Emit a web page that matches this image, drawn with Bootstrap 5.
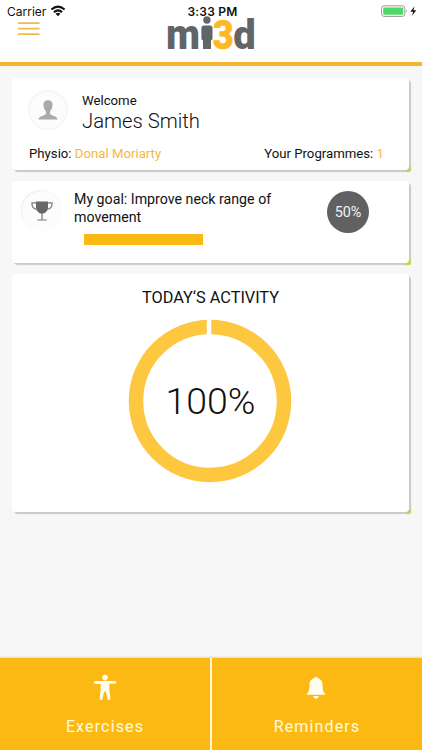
<!DOCTYPE html>
<html lang="en">
<head>
<meta charset="utf-8">
<meta name="viewport" content="width=device-width, initial-scale=1">
<title>mi3d</title>
<link href="https://cdn.jsdelivr.net/npm/bootstrap@5.3.0/dist/css/bootstrap.min.css" rel="stylesheet">
<style>
body{font-family:Roboto,sans-serif;background:#f7f7f7;color:#111;font-size:14px;line-height:17px;height:750px;overflow:hidden}
svg{display:block;flex:none}
.top-bar{height:66px;background:#fff;border-bottom:4px solid #f5b52e}
.status{height:20px;font-family:Inter,sans-serif;font-size:12px;padding:2px 5px 0 7px;color:#111}
.status > div{flex:1 0 0}
.clock{font-weight:600;font-size:12px;letter-spacing:.2px;padding-left:1px;position:relative;z-index:1}
.menu-btn{margin:2px 0 0 18px;padding:0;border:0;background:none}
.brand{left:162px;top:14px;overflow:visible}
.panel{background:#fff;border:0;border-radius:4px;box-shadow:2px 2px 1px #c9c9c5;position:relative}
.panel::after{content:"";position:absolute;right:-2px;bottom:-2px;width:5px;height:5px;background:linear-gradient(135deg,transparent 48%,#c5d63c 50%);border-bottom-right-radius:2px}
.panel-user{height:92px;padding:12px 25px 0 16px}
.panel-goal{height:82px;padding:10px 41px 0 10px}
.panel-day{height:238px;padding-top:15px}
.round{border-radius:50%;background:#fcfcfc;flex:none}
.round-user{width:40px;height:40px;border:2px solid #f6f6f6}
.round-goal{width:40px;height:40px;box-shadow:-1px -1px 2px #ececec}
.user-text{margin:2px 0 0 14px;font-size:13.2px}
.user-name{font-weight:300;font-size:20.3px;line-height:24px}
.user-meta{margin:12px 0 0 1px;font-size:13.2px}
.accent{color:#f5b83d}
.goal-text{margin-left:12px;width:210px;font-size:14.2px;line-height:17.5px}
.goal-bar{height:11px;width:119px;border-radius:0;margin:8px 0 0 10px;background:none}
.goal-bar .progress-bar{background:#fdb913}
.goal-pct{width:42px;height:42px;background:#616163;color:#f1f1f1;font-size:14.4px}
.goal-pct{margin-right:-1px}
.day-title{font-size:16.3px;line-height:18px;letter-spacing:-.01px}
.ring{margin:12px 2px 0 0}
.tabs-bottom{height:92px;background:#fdb913;box-shadow:0 0 3px #bbb}
.tab-item{flex:0 0 210px;color:#fffbe0;font-size:16px;letter-spacing:1.15px;line-height:20px;text-decoration:none;padding-top:16px}
.tab-item span{margin-top:15px}
.tab-item + .tab-item{flex:1;border-left:2px solid #fff6d5}
</style>
<script src="https://cdn.jsdelivr.net/npm/bootstrap@5.3.0/dist/js/bootstrap.bundle.min.js"></script>
</head>
<body class="d-flex flex-column">
<header class="top-bar position-relative flex-shrink-0">
  <div class="status d-flex align-items-center">
    <div class="d-flex align-items-center gap-1"><span>Carrier</span>
      <svg width="16" height="12" viewBox="0 0 16 12" fill="none" stroke="#111" stroke-width="2"><path d="M1.4 4.6Q8-1.4 14.6 4.6M3.9 7.2Q8 3.5 12.1 7.2"/><path d="M8 11.2L5.6 8.8Q8 6.9 10.4 8.8Z" fill="#111" stroke="none"/></svg>
    </div>
    <div class="clock text-center">3:33 PM</div>
    <div class="d-flex justify-content-end align-items-center">
      <svg width="37" height="12" viewBox="0 0 37 12"><rect x="1.5" y=".8" width="23.4" height="10.6" rx="2.7" fill="#fff" stroke="#999"/><rect x="3.2" y="2.4" width="20" height="7.4" rx="1.2" fill="#4cd964"/><path d="M26.2 4.5Q28 6 26.2 7.7Z" fill="#999"/><path d="M34.5 1.2L30.3 6.8H33.2L32 10.8L36.3 5.3H33.4Z" fill="#111"/></svg>
    </div>
  </div>
  <button class="menu-btn" aria-label="Menu"><svg width="22" height="14" viewBox="0 0 22 14" stroke="#f2ba48" stroke-width="1.8"><path d="M0 1.2H21.5M0 6.7H21.5M0 12.2H21.5"/></svg></button>
  <svg class="brand position-absolute" width="98" height="38" viewBox="0 0 98 38" font-family="Roboto,sans-serif" font-weight="900" fill="#636466">
    <text x="4" y="35" font-size="42" textLength="34" lengthAdjust="spacingAndGlyphs">m</text>
    <circle cx="44.9" cy="6" r="3.7"/><path d="M42 11.5H48Q50.5 11.5 50.5 14.5V24Q50.5 26 49 26.5V35H41V26.5Q39.4 26 39.4 24V14.5Q39.4 11.5 42 11.5Z"/>
    <text x="50.7" y="35" font-size="40" textLength="21" lengthAdjust="spacingAndGlyphs" fill="#fdb922" stroke="#fdb922" stroke-width=".5">3</text>
    <text x="71.3" y="35" font-size="41" textLength="22.5" lengthAdjust="spacingAndGlyphs">d</text>
  </svg>
</header>
<main class="d-flex flex-column flex-grow-1" style="gap:11px;padding:12px 13px 0 12px">
  <section class="card panel panel-user">
    <div class="d-flex"><div class="round round-user d-flex align-items-center justify-content-center"><svg width="20" height="20" viewBox="0 0 20 20" fill="#aaa"><path d="M10 .3C6.8.3 5.2 2.3 5.5 5.3C5.7 8 6.6 9.8 7.9 11.3V14C6.8 15.8 1.2 15.5.5 19.4H19.5C18.8 15.5 13.2 15.8 12.1 14V11.3C13.4 9.8 14.3 8 14.5 5.3C14.8 2.3 13.2.3 10 .3Z"/></svg></div>
      <div class="user-text"><div>Welcome</div><div class="user-name">James Smith</div></div></div>
    <div class="user-meta d-flex justify-content-between"><span>Physio: <span class="accent">Donal Moriarty</span></span><span>Your Programmes: <span class="accent">1</span></span></div>
  </section>
  <section class="card panel panel-goal">
    <div class="d-flex"><div class="round round-goal d-flex align-items-center justify-content-center"><svg width="22" height="20" viewBox="0 0 22 20" fill="#666769"><path d="M5 .5H17V7Q16 12.3 11 12.8Q6 12.3 5 7Z"/><path d="M5 1.8H1Q.5 7.2 6 8.5M17 1.8H21Q21.5 7.2 16 8.5M11 12V18.8M6.3 19H15.7" fill="none" stroke="#77787a" stroke-width="1.2"/></svg></div>
      <div class="goal-text">My goal: Improve neck range of movement<div class="progress goal-bar"><div class="progress-bar" style="width:100%"></div></div></div>
      <div class="goal-pct rounded-circle d-flex align-items-center justify-content-center ms-auto">50%</div></div>
  </section>
  <section class="card panel panel-day align-items-center">
    <div class="day-title">TODAY‘S ACTIVITY</div>
    <svg class="ring" width="164" height="164" viewBox="0 0 164 164"><circle cx="82" cy="82" r="74" fill="none" stroke="#fec740" stroke-width="14.5"/><path d="M81 0V17" stroke="#fff" stroke-width="4.5"/><text x="82.5" y="95" text-anchor="middle" font-family="Roboto,sans-serif" font-weight="300" font-size="37.4" fill="#111">100%</text></svg>
  </section>
</main>
<nav class="tabs-bottom d-flex flex-shrink-0">
  <a class="tab-item d-flex flex-column align-items-center" href="#"><svg width="24" height="28" viewBox="0 0 24 28" fill="#fffdf0"><circle cx="12" cy="3.6" r="2.8"/><path d="M2 7H22Q23.3 7.1 23.3 8.4Q23.3 9.8 22 9.8H16.3V15L17.4 24.5Q17.4 26 16.1 26Q14.8 26 14.5 24.7L12.7 17.5H11.3L9.5 24.7Q9.1 26 7.9 26Q6.6 26 6.6 24.5L7.7 15V9.8H2Q.7 9.7.7 8.4Q.7 7.1 2 7Z"/></svg><span>Exercises</span></a>
  <a class="tab-item d-flex flex-column align-items-center" href="#"><svg width="22" height="28" viewBox="0 0 22 28" fill="#fffdf0" style="margin-right:2px"><path d="M11 2.7Q12.2 2.7 12.3 4C16 4.7 17.6 7.5 17.6 11.5C17.6 16.5 18.5 18.3 20.8 20.8H1.2C3.5 18.3 4.4 16.5 4.4 11.5C4.4 7.5 6 4.7 9.7 4Q9.8 2.7 11 2.7ZM8.2 22H13.8Q13.3 24.8 11 24.8Q8.7 24.8 8.2 22Z"/></svg><span>Reminders</span></a>
</nav>
</body>
</html>
